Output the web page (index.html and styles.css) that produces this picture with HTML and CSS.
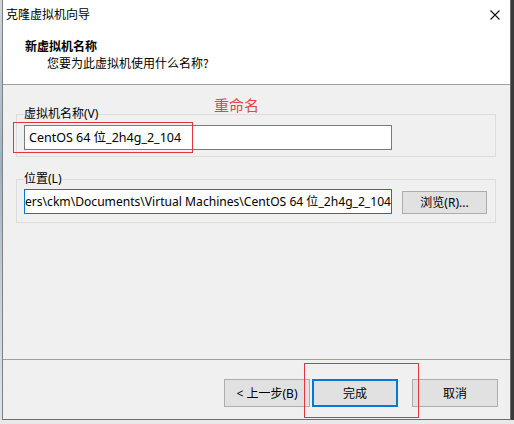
FILE: index.html
```html
<!DOCTYPE html>
<html lang="zh-CN">
<head>
<meta charset="utf-8">
<title>克隆虚拟机向导</title>
<link rel="stylesheet" href="styles.css">
</head>
<body>
<div class="screen">
  <div class="desk-left"></div>
  <div class="window">
    <div class="titlebar">
      <span class="title">克隆虚拟机向导</span>
      <svg class="close" width="10" height="10" viewBox="0 0 10 10"><path d="M0.5 0.5 L9.5 9.5 M9.5 0.5 L0.5 9.5" stroke="#111" stroke-width="1.1" fill="none"/></svg>
    </div>
    <div class="header">
      <div class="h-title">新虚拟机名称</div>
      <div class="h-sub">您要为此虚拟机使用什么名称?</div>
    </div>
    <div class="content">
      <fieldset class="group group-name">
        <legend>虚拟机名称(V)</legend>
        <div class="field">CentOS 64 位_2h4g_2_104</div>
      </fieldset>
      <fieldset class="group group-loc">
        <legend>位置(L)</legend>
        <div class="row">
          <div class="field focused">ers\ckm\Documents\Virtual Machines\CentOS 64 位_2h4g_2_104</div>
          <div class="btn browse">浏览(R)...</div>
        </div>
      </fieldset>
    </div>
    <div class="footer">
      <div class="btn">&lt; 上一步(B)</div>
      <div class="btn default">完成</div>
      <div class="btn cancel">取消</div>
    </div>
    <div class="mark mark-name"></div>
    <div class="mark-text">重命名</div>
    <div class="mark mark-finish"></div>
  </div>
  <div class="desk-right"></div>
</div>
</body>
</html>
```

FILE: styles.css
```css
* { box-sizing: border-box; }
html, body {
  margin: 0;
  padding: 0;
  width: 514px;
  height: 424px;
  overflow: hidden;
  background: #e9e9e9;
}
body {
  font-family: "Noto Sans", "Noto Sans CJK SC", sans-serif;
  font-size: 12px;
  color: #000;
}
.screen {
  display: flex;
  height: 420px;
}
.desk-left {
  width: 2px;
  background: linear-gradient(#cfd6da, #9fb0bd 40%, #c9d0d4 70%, #dfe3e5);
}
.desk-right {
  width: 3px;
  background: #3a3a3a;
}
.window {
  position: relative;
  width: 509px;
  height: 420px;
  border-left: 1px solid #808080;
  border-right: 1px solid #6c6c6c;
  border-bottom: 1px solid #6c6c6c;
  background: #f0f0f0;
  display: flex;
  flex-direction: column;
}
.titlebar {
  height: 30px;
  background: #fff;
  display: flex;
  align-items: center;
  justify-content: space-between;
  padding: 0 10px 2px 3px;
  font-family: "Noto Sans CJK SC", sans-serif;
}
.title { font-size: 12px; line-height: 16px; }
.close { display: block; margin-top: 1px; }
.header {
  height: 55px;
  background: #fff;
  border-bottom: 1px solid #a0a0a0;
  padding-top: 8px;
  font-family: "Noto Sans CJK SC", sans-serif;
}
.h-title {
  font-weight: bold;
  line-height: 16px;
  padding-left: 22px;
}
.h-sub {
  line-height: 16px;
  padding-left: 44px;
  margin-top: 1px;
}
.content {
  flex: 1;
  padding: 21px 14px 0 13px;
}
.group {
  margin: 0;
  border: 1px solid #dcdcdc;
  padding: 3px 7px 6px 7px;
  min-width: 0;
}
.group legend {
  padding: 0;
  line-height: 16px;
  font-family: "Noto Sans", "Noto Sans CJK SC", sans-serif;
}
.group-loc {
  margin-top: 14px;
  padding-top: 2px;
  padding-bottom: 8px;
}
.field {
  width: 368px;
  height: 25px;
  background: #fff;
  border: 1px solid #7a7a7a;
  padding-left: 4px;
  line-height: 23px;
  white-space: nowrap;
  overflow: hidden;
  font-size: 12.5px;
}
.field.focused {
  border-color: #0078d7;
  padding-left: 0;
  font-size: 12.1px;
}
.row {
  display: flex;
  align-items: center;
  gap: 10px;
}
.btn {
  width: 86px;
  height: 28px;
  background: #e1e1e1;
  border: 1px solid #adadad;
  display: flex;
  align-items: center;
  justify-content: center;
  font-family: "Noto Sans", "Noto Sans CJK SC", sans-serif;
  font-size: 12px;
}
.btn.browse {
  width: 85px;
  height: 23px;
  margin-top: 1px;
}
.btn.default {
  border: 2px solid #0078d7;
  margin-left: 2px;
}
.btn.cancel { margin-left: 14px; }
.footer {
  height: 60px;
  border-top: 1px solid #a0a0a0;
  display: flex;
  justify-content: flex-end;
  align-items: flex-start;
  padding: 19px 12px 0 0;
}
.mark {
  position: absolute;
  border: 1px solid #e2343f;
}
.mark-name { left: 10px; top: 122px; width: 180px; height: 31px; }
.mark-finish { left: 301px; top: 363px; width: 115px; height: 55px; }
.mark-text {
  position: absolute;
  left: 211px;
  top: 95px;
  font-family: "Noto Sans CJK SC", sans-serif;
  font-size: 15px;
  line-height: 20px;
  color: #e5434b;
}
```
